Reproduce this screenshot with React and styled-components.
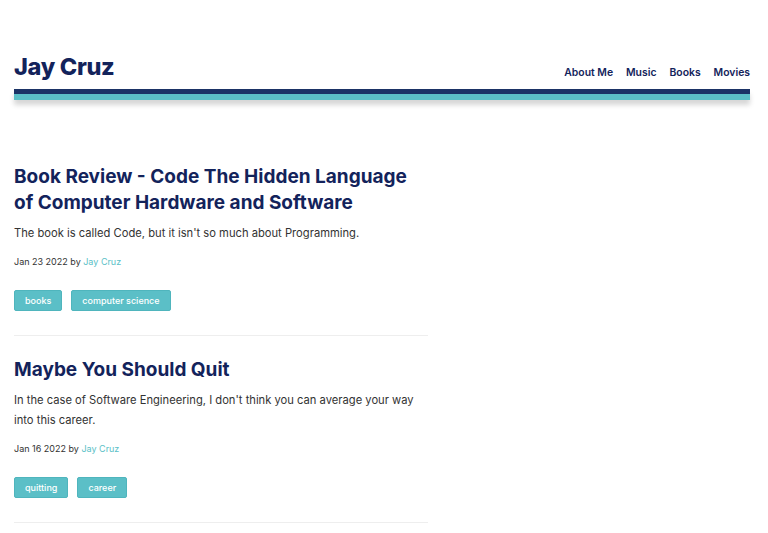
import styled, { createGlobalStyle } from 'styled-components';

const GlobalStyle = createGlobalStyle`
  body {
    margin: 0;
    background: #fff;
    font-family: Inter, "Noto Sans", sans-serif;
    color: #333;
  }
  * { box-sizing: border-box; }
`;

const posts = [
  {
    title: 'Book Review - Code The Hidden Language of Computer Hardware and Software',
    excerpt: "The book is called Code, but it isn't so much about Programming.",
    date: 'Jan 23 2022',
    tags: ['books', 'computer science'],
  },
  {
    title: 'Maybe You Should Quit',
    excerpt: "In the case of Software Engineering, I don't think you can average your way into this career.",
    date: 'Jan 16 2022',
    tags: ['quitting', 'career'],
  },
];

const App = () => {
  return (
    <Page>
      <GlobalStyle />
      <Header>
        <TopRow>
          <Brand>Jay Cruz</Brand>
          <Nav>
            <NavLink>About Me</NavLink>
            <NavLink>Music</NavLink>
            <NavLink>Books</NavLink>
            <NavLink>Movies</NavLink>
          </Nav>
        </TopRow>
        <Stripe />
      </Header>
      <PostList>
        {posts.map((post) => (
          <Post key={post.title}>
            <Title>{post.title}</Title>
            <Excerpt>{post.excerpt}</Excerpt>
            <Meta>
              {post.date} by <Author>Jay Cruz</Author>
            </Meta>
            <Tags>
              {post.tags.map((tag) => (
                <Tag key={tag}>{tag}</Tag>
              ))}
            </Tags>
          </Post>
        ))}
      </PostList>
    </Page>
  );
};

const Page = styled.div`
  width: 736px;
  margin-left: 14px;
  padding-top: 52px;
`;

const Header = styled.header`
  display: flex;
  flex-direction: column;
`;

const TopRow = styled.div`
  display: flex;
  justify-content: space-between;
  align-items: flex-end;
  padding-bottom: 7px;
`;

const Brand = styled.h1`
  margin: 0;
  font-family: Inter, sans-serif;
  font-weight: 800;
  font-size: 23.5px;
  line-height: 30px;
  letter-spacing: -0.3px;
  color: #13235b;
`;

const Nav = styled.nav`
  display: flex;
  gap: 13px;
  padding-bottom: 3px;
`;

const NavLink = styled.a`
  font-family: Inter, sans-serif;
  font-weight: 600;
  font-size: 10.4px;
  color: #13235b;
  cursor: pointer;
`;

const Stripe = styled.div`
  height: 11px;
  border-top: 5px solid #1b3366;
  background: #5bbfc7;
  box-shadow: 0 5px 5px rgba(0, 0, 0, 0.16);
`;

const PostList = styled.main`
  width: 414px;
  padding-top: 55px;
`;

const Post = styled.article`
  padding-top: 9px;
  padding-bottom: 24px;
  border-bottom: 1px solid #eeeeee;
  margin-bottom: 12px;
`;

const Title = styled.h2`
  margin: 0 0 7px;
  font-family: Inter, sans-serif;
  font-weight: 700;
  font-size: 19px;
  line-height: 26px;
  color: #13235b;
`;

const Excerpt = styled.p`
  margin: 0 0 11px;
  font-size: 11.2px;
  line-height: 20px;
  color: #333;
`;

const Meta = styled.div`
  font-size: 9px;
  line-height: 16px;
  color: #333;
  margin-bottom: 20px;
`;

const Author = styled.a`
  color: #5bbfc7;
`;

const Tags = styled.div`
  display: flex;
  gap: 9px;
`;

const Tag = styled.span`
  display: inline-block;
  padding: 0 10px;
  height: 21px;
  line-height: 19px;
  font-size: 9px;
  font-weight: 500;
  color: #fff;
  background: #5bbfc7;
  border: 1px solid #4fb5bd;
  border-radius: 2px;
`;

export default App;
